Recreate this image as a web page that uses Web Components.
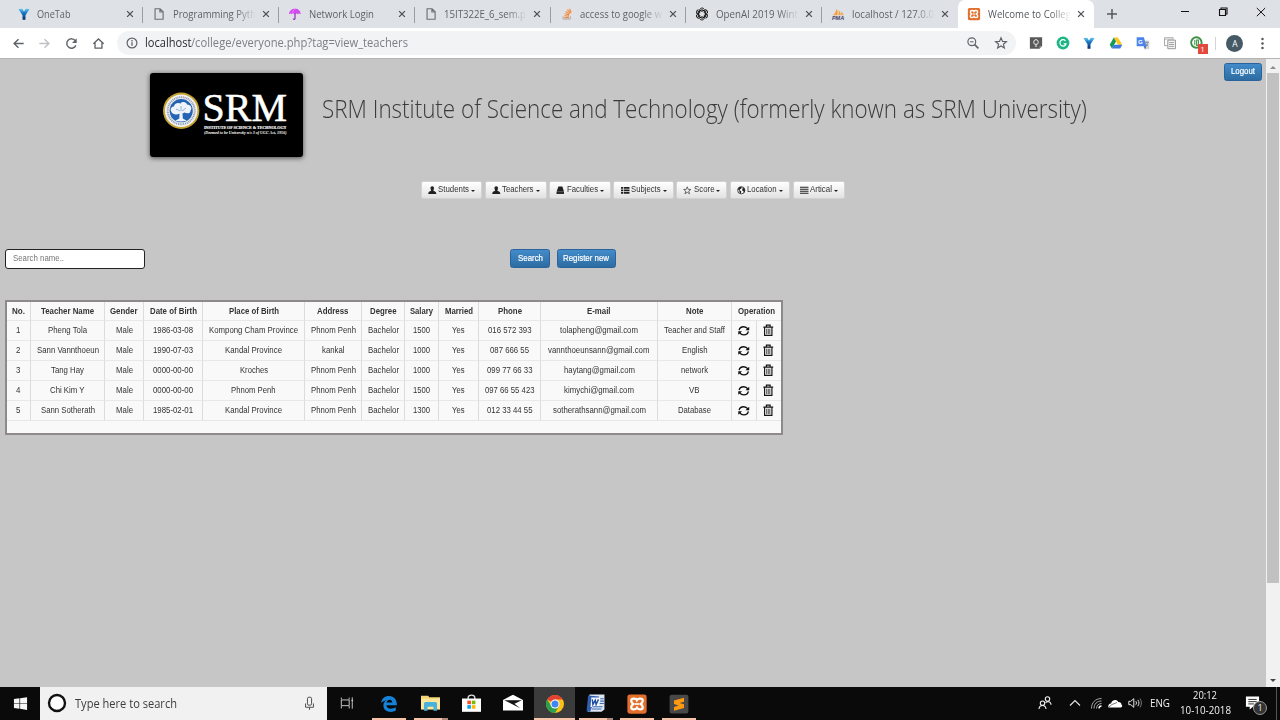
<!DOCTYPE html>
<html lang="en">
<head>
<meta charset="utf-8">
<title>Welcome to College</title>
<style>
html,body{margin:0;height:100%;overflow:hidden}
body{font-family:"Open Sans","Noto Sans",sans-serif;background:#c6c6c6}
</style>
</head>
<body>
<desktop-screen></desktop-screen>
<script>
const define = (name, render, after) => customElements.define(name, class extends HTMLElement {
  connectedCallback() {
    if (this.shadowRoot) return;
    this.attachShadow({mode: 'open'}).innerHTML = render(this);
    if (after) after(this);
  }
});

/* Text run condensed or widened to fill the width given in "w". */
define('fit-text', () => `<style>:host{display:inline-block;white-space:pre;line-height:1.3}span{display:inline-block;transform-origin:0 50%}</style><span><slot></slot></span>`, el => {
  const w = +el.getAttribute('w');
  if (!w) return;
  const span = el.shadowRoot.querySelector('span');
  const natural = span.getBoundingClientRect().width;
  el.style.width = w + 'px';
  span.style.transform = `scaleX(${(w / natural).toFixed(4)})`;
});

const line = (d, c = '#5f6368', w = 1.3) => `<path d="${d}" fill="none" stroke="${c}" stroke-width="${w}"/>`;
const fill = (d, c) => `<path d="${d}" fill="${c}"/>`;
const xampp = `<rect x="1" y="1" width="14" height="14" rx="1.8" fill="#e2702c"/>
  <path d="M7.9 5.2C7.2 3.6 3.8 3.7 3.8 5.5c0 1.2.6 1.9 1.5 2.5C4.400 8.600 3.800 9.300 3.800 10.500c0 1.800 3.400 1.900 4.200.3.8 1.600 4.200 1.500 4.200-.3 0-1.200-.6-1.900-1.500-2.500.9-.6 1.500-1.300 1.500-2.500 0-1.800-3.400-1.900-4.300-.3z" fill="none" stroke="#fff" stroke-width="1.600"/>
  <path d="M6.500 8h3" stroke="#fff" stroke-width="1.200"/>`;
const onetab = `<defs><linearGradient id="g" x1="0" y1="0" x2="0" y2="1"><stop offset="0" stop-color="#64c8ee"/><stop offset=".4" stop-color="#1a74c4"/><stop offset="1" stop-color="#0c2c62"/></linearGradient></defs>
  <path d="M1.600 2.200l4.300-.2L8 5.200l2-3.200 4.400.2L9.700 9.300V14.500H6.300V9.300z" fill="url(#g)"/>`;
const page = `<path d="M3.500 2h5.700l3.500 3.500v8.500H3.500zM9 2.200v3.500h3.500" fill="none" stroke="#6c7074" stroke-width="1.300"/>`;

const icons = {
  onetab, page, xampp,
  umbrella: `<path d="M1.200 8.300C1.300 4 4.500 1.900 8 1.900s6.500 2.200 6.700 6.400c-1.200-1.200-2.400-1.200-3.500 0-.9-1.100-2-1.200-2.700-.2h-1c-.8-1-2-.9-2.900.2-1-1.200-2.200-1.200-3.400 0z" fill="#d24bf0"/><path d="M5 8C5.200 5 6.500 3 8 2" stroke="#f08cff" fill="none"/><path d="M8 7.500v5.600c0 1.300-1.900 1.300-1.900 0" stroke="#8b25b2" stroke-width="1.300" fill="none"/>`,
  stack: `<path d="M3.500 10.500v3.300h8.300v-3.300" fill="none" stroke="#aaa" stroke-width="1.100"/><path d="M5 12.200h5.300M5 10l5.300.5M5.400 7.700l5.100 1.400M6.500 5.200l4.600 2.700M8.400 3l3.600 4.100M10.900 2l1.800 4.300" stroke="#f48d42" stroke-width="1.400"/>`,
  openai: `<g fill="none" stroke="#111" stroke-width="1.100">${[0,60,120,180,240,300].map(a => `<path d="M5.300 7.200V3.900C5.300 1.300 8.500.3 10.300 2.100M5.600 4.500L8 3.100 11.300 5" transform="rotate(${a} 8 8)"/>`).join('')}</g>`,
  pma: `<path d="M2 9.500C4 8.600 5.800 5 6.200 2.300 8 4 8 7.500 7.200 9.500zM8.200 9.500c.8-2 .7-4 .2-6 2 1.500 3 4 2.700 6zM11.800 9.500c.2-1.500 0-3-.5-4.300 1.800 1.100 2.700 2.700 3 4.300z" fill="#f6a044"/><text x="8" y="14.500" text-anchor="middle" font-family="Liberation Sans" font-weight="bold" font-style="italic" font-size="5.500" textLength="14" lengthAdjust="spacingAndGlyphs" fill="#444063">PMA</text>`,
  close: line('M4.700 4.700l6.600 6.600M11.300 4.700l-6.600 6.600', '#4c5054', 1.500),
  plus: line('M8 3v10M3 8h10', '#55595d', 1.500),
  min: line('M4 7.500h8', '#111', 1),
  restore: line('M4.500 5.500h6v6h-6zM6 5.500V4h6v6h-1.500', '#111', 1.100),
  winclose: line('M3.800 4l8.400 8.200M12.200 4l-8.400 8.200', '#111', 1),
  back: line('M13.500 8H3.500M8 3.500L3.300 8 8 12.500', '#5f6368', 1.500),
  forward: line('M2.500 8h10M8 3.500L12.700 8 8 12.500', '#bfc1c4', 1.500),
  reload: line('M12.600 10A5 5 0 1 1 12 5', '#5f6368', 1.500) + fill('M13.500 2.500v5H8.600z', '#5f6368'),
  home: line('M2.500 8.300L8 3.200l5.500 5.100M4.300 7.200V13h7.400V7.200', '#5f6368', 1.400),
  info: `<circle cx="8" cy="8" r="4.900" fill="none" stroke="#5f6368" stroke-width="1.200"/>` + line('M8 7.300v3.500M8 5.100v1.300'),
  zoomout: `<circle cx="6.800" cy="6.800" r="3.900" fill="none" stroke="#5f6368" stroke-width="1.200"/>` + line('M5 6.800h3.600', '#5f6368', 1) + line('M9.600 9.600l3.800 3.800', '#5f6368', 1.600),
  star: line('M8 2.800l1.500 3.600 3.900.3-3 2.500 1 3.800L8 11l-3.400 2 1-3.800-3-2.500 3.900-.3z', '#5f6368', 1.150),
  keep: `<path d="M1 1.500h14v10l-3 3H1z" fill="#595959"/><path d="M15 11.500l-3 3v-3z" fill="#a0a0a0"/><path d="M6.700 9.500C5 8.500 4.700 4.500 8 4.200c3.300.3 3 4.300 1.300 5.300zM6.700 11.500h2.600" fill="none" stroke="#fff" stroke-width="1.100"/>`,
  grammarly: `<circle cx="8" cy="8" r="7.300" fill="#1eb584"/>` + line('M10.800 5.500A3.600 3.600 0 1 0 11.500 9H8.800', '#fff', 1.400),
  drive: `<path d="M5.500 1.800h4.600L15.200 10h-4.900z" fill="#fdc717"/><path d="M5.500 1.800L8 6.400 3.300 14.200.8 10z" fill="#149a56"/><path d="M5.600 10h9.600l-2.400 4.200H3.300z" fill="#3f78e0"/>`,
  translate: `<path d="M8 5h7.200v10H9z" fill="#d5d7da"/><path d="M.8 1.300h8.200l2.900 10.500H.8z" fill="#4b83ee"/><path d="M9 11.800h2.900l-1.500 3.200z" fill="#3060bd"/><text x="2.300" y="8.800" font-family="Liberation Sans" font-size="7" font-weight="bold" fill="#fff">G</text>` + line('M10.600 7.300h3.700M12.400 6v1.300M13.800 7.500c-.5 2-1.400 3-2.500 4M11.200 9l2.700 2.600', '#687785', .8),
  copy: `<path d="M1.800 2h9.700v2M1.800 2v9h3.500" fill="none" stroke="#9a9a9a"/><path d="M2 3.700h9" stroke="#bbb"/><path d="M5.500 4.700h8.700v9.800H5.500z" fill="#f4f4f4" stroke="#8c8c8c"/>` + line('M7 7.500h5.500M7 9.700h5.500M7 11.900h5.500', '#8c8c8c', .9),
  library: `<circle cx="7.300" cy="7.500" r="6" fill="none" stroke="#3b9144" stroke-width="2.200"/><path d="M5.500 4.500v6.200M7.600 4.500h2v6.200h-2z" stroke="#3b9144" stroke-width="1.200" fill="none"/>`,
  menu: `<g fill="#55595d"><circle cx="8" cy="3.200" r="1.350"/><circle cx="8" cy="8" r="1.350"/><circle cx="8" cy="12.800" r="1.350"/></g>`,
  user: fill('M8 .5c2.900 0 3.500 2.200 3.200 4.800-.2 1.800-.9 2.400-1.200 3.300 0 1.300 5 1.600 5.500 4.400v2H.5v-2C1 10.200 6 9.900 6 8.600c-.3-.9-1-1.500-1.200-3.300C4.500 2.700 5.100.5 8 .5z', '#222'),
  hdd: fill('M4.500 1h7.500l3 9.500H1.200zM1 11h14v4H1z', '#222') + line('M3 13h10', '#666', .6),
  list: fill('M0 2h4.200v3.300H0zM5.500 2H16v3.300H5.500zM0 6.600h4.200v3.300H0zM5.500 6.600H16v3.300H5.500zM0 11.200h4.200v3.300H0zM5.500 11.200H16v3.300H5.500z', '#222'),
  starline: line('M8 1.500l1.800 4.800 5 .2-4 3.100 1.500 5L8 11.800l-4.300 2.800 1.500-5-4-3.100 5-.2z', '#333', 1.300),
  globe: `<circle cx="8" cy="8" r="6.800" fill="#fff" stroke="#333" stroke-width="1.700"/>` + fill('M1.500 6L5 1.800 9 2l-1 3-2.500 1L5 8l3 2-.5 4L5 12.500 4.300 9zM11 3l4 3-.5 5-2 1.500L12 9.500l-2.500-1L10 6z', '#222'),
  lines: line('M0 2.500h16M0 6.200h16M0 9.900h16M0 13.600h16', '#222', 2),
  refresh: line('M2.600 7.300C3 4.500 5.300 3.200 8 3.200c2.200 0 3.700 1 4.900 2.700M13.400 8.700c-.4 2.800-2.700 4.100-5.400 4.100-2.200 0-3.700-1-4.900-2.700', '#111', 1.600) + fill('M14.500 3.200v4.300h-4.500zM1.500 12.800V8.500H6z', '#111'),
  trash: line('M5.600 3.500V1.400h4.800v2.100M1.700 4h12.600M3.300 4.600v9.900h9.400V4.600', '#151515', 1.500) + line('M6 6v7M8 6v7M10 6v7', '#333', 1.100),
  windows: fill('M1 3.300l5.900-.9v5.200H1zM7.600 2.300L15 1.200v6.400H7.600zM1 8.300h5.900v5.300L1 12.700zM7.600 8.300H15v6.500l-7.400-1.100z', '#f5f5f5'),
  cortana: `<circle cx="8" cy="8" r="6.400" fill="#fff" stroke="#111" stroke-width="1.900"/>`,
  mic: `<rect x="5.800" y="1.300" width="4.400" height="8.500" rx="1.500" fill="none" stroke="#444" stroke-width="1"/>` + line('M3.800 8v4h8.400V8M8 12v2.700', '#444', 1),
  taskview: line('M1.500 4V1.800M10.500 4V1.800M1.500 4.500h9v6.500h-9zM1.500 11.500v2.700M10.500 11.500v2.700M14 1.500v13M13 5h2', '#ddd', 1) ,
  edge: fill('M1 7C1.600 3.200 4.300.9 8 .9c4.600 0 7 3.100 7 8.100H5.700c.2 3.700 5.300 3.900 8.300 1.900v3.200c-4.500 2.200-11 .9-11-4.700C3 7.300 4 5.600 5.800 4.700 3.900 5.100 2.200 6 1 7zM5.900 6.600h5C10.900 3.400 6.300 3.600 5.900 6.600z', '#1582d8'),
  folder: fill('M0 1.500h6l1 1.300h9v10H0z', '#f5d676') + fill('M0 4h16v9H0z', '#ffe69b') + fill('M2.500 8.500c0-1.200.7-1.700 1.700-1.700h7.600c1 0 1.700.5 1.700 1.700V14h-3v-3.300h-5V14h-3z', '#48b1dc'),
  store: line('M5.200 5V2.800C5.600.4 10.400.4 10.800 2.800V5', '#ddd', 1.100) + fill('M0 3.800h16V15H0z', '#fff') + fill('M4.500 5.600h3v3h-3z', '#f25022') + fill('M8.300 5.600h3v3h-3z', '#7fba00') + fill('M4.500 9.400h3v3h-3z', '#00a4ef') + fill('M8.300 9.400h3v3h-3z', '#ffb900'),
  mail: fill('M0 5.500L8 1.300l8 4.200V14H0z', '#fff') + fill('M1 5.800h14L9.200 8.600l4.500 3.500z', '#111'),
  chrome: `<circle cx="8" cy="8" r="7.200" fill="#fbc116"/><path d="M8 8L1.760 4.400A7.200 7.200 0 0 1 14.240 4.400H8z" fill="#e34133"/><path d="M1.760 4.400A7.200 7.200 0 0 0 8 15.200L11.100 9.800 5 9.500z" fill="#2ba14b"/><circle cx="8" cy="8" r="3.600" fill="#fff"/><circle cx="8" cy="8" r="2.800" fill="#4285f4"/>`,
  word: fill('M3 .5h12.500v12.500L13 15H1.500z', '#dce6f5') + fill('M1.800 1.200L11 2 10 10.500 5 11 3.500 15 .5 14.500z', '#2f5fae') + fill('M4.500 3h7.500l-1 8H3.800z', '#f5f8fd') + line('M12 4h3M12 6h3M11.500 8h3.500M5.500 10.700h8.500M5 12.700h8', '#3c6ab4', .9) + line('M5.300 4.500l.5 4.300 2-3.500.7 3.500 2-4.300', '#1f4e9f', 1.200),
  sublime: `<rect x=".5" y=".5" width="15" height="15" rx="1.500" fill="#484848"/>` + fill('M12 3v3.100L8.400 7.200l3.600 1v3L4 13.400v-3.100l3.600-1.100L4 8V5.200z', '#ff9a10'),
  people: `<g fill="none" stroke="#eee" stroke-width="1.100"><circle cx="10.500" cy="4" r="2.200"/><path d="M8.500 8c1.400-2.300 5.500-1.700 5.500 1.700"/><circle cx="5.500" cy="8.200" r="2.200"/><path d="M2 14c.4-4.700 6.600-4.700 7 0"/></g>`,
  chevron: line('M3 10.500l5-5 5 5', '#e8e8e8', 1.100),
  wifi: line('M3.500 13.500C3.500 7.500 7.500 3.500 13.500 3.500M6 13.500c0-4.500 3-7.500 7.500-7.500M8.500 13.500c0-3 2-5 5-5', '#aaa', 1) + line('M11 13.500c0-1.500 1-2.500 2.500-2.500', '#fff', 1.300),
  cloud: fill('M1.500 12.500c-.8-3 1.500-4.200 2.600-4C4.600 5 9.700 3.500 11.100 7c2.500-.2 3.600 1.500 3.300 2.600 1.300.7.900 2.900-.5 2.900z', '#fff') + line('M2 12l3-2.500 5-2', '#222', .6),
  speaker: line('M1.800 6.300h2l3-2.600v8.600l-3-2.600h-2zM8.800 6.200c.8 1 .8 2.600 0 3.600M10.800 4.900c1.500 1.800 1.500 4.500 0 6.300', '#e6e6e6', 1) + line('M12.900 3.500c2 2.500 2 6.500 0 9', '#777', 1),
  note: fill('M1 1.500h14v11H8.500L5 15.500v-3H1z', '#fff') + line('M3.500 4.700h9M3.500 7.100h9M3.500 9.500h6', '#222', 1)
};
define('x-icon', el => {
  const s = el.getAttribute('s') || 16;
  return `<style>:host{display:inline-block;flex:none;width:${s}px;height:${s}px}svg{display:block;overflow:visible}</style>
  <svg width="${s}" height="${s}" viewBox="0 0 16 16">${icons[el.getAttribute('name')]}</svg>`;
});

define('browser-tab', el => `<style>
  :host{display:flex;align-items:center;width:135.800px;height:28px;box-sizing:border-box;padding-left:9px;position:relative;color:#5f6368;font-size:10.500px;flex:none}
  :host::after{content:"";position:absolute;right:0;top:6.500px;width:1px;height:16px;background:#9a9da2}
  :host([last])::after{display:none}
  :host([active]){background:#fff;border-radius:7px 7px 0 0;color:#55595d}
  :host([active])::after{display:none}
  .t{margin-left:6.500px;width:83px;overflow:hidden;line-height:16px;height:16px}
  .t.fade{-webkit-mask-image:linear-gradient(90deg,#000 75%,transparent)}
  .c{margin-left:3px}
  x-icon{display:block}
</style><x-icon name="${el.getAttribute('icon')}" s="14"></x-icon><div class="t ${+el.getAttribute('w') > 75 ? 'fade' : ''}"><fit-text w="${el.getAttribute('w')}">${el.getAttribute('label')}</fit-text></div><x-icon class="c" name="close" s="14"></x-icon>`);

define('tab-strip', () => `<style>
  :host{display:flex;height:28px;background:#dee1e6;padding-left:7.500px}
  .new{margin:6px 0 0 10px}
  .win{margin-left:auto;display:flex;padding-top:4px}
  .win x-icon{margin-right:22px}
  .win x-icon:last-child{margin-right:11.500px}
</style>${[['onetab','OneTab',33.500],['page','Programming Pyth',83],['umbrella','Network Login',65],['page','15IT322E_6_sem.p',82],['stack','access to google w',82],['openai','OpenAI 2019 Wint',82],['pma','localhost / 127.0.0',82],['xampp','Welcome to Colleg',83]]
  .map((t, i) => `<browser-tab icon="${t[0]}" label="${t[1]}" w="${t[2]}" ${i == 7 ? 'active' : i == 6 ? 'last' : ''}></browser-tab>`).join('')}
<x-icon class="new" name="plus"></x-icon><div class="win"><x-icon name="min"></x-icon><x-icon name="restore"></x-icon><x-icon name="winclose"></x-icon></div>`);

define('tool-bar', () => `<style>
  :host{display:flex;align-items:center;height:30px;background:#fff;border-bottom:1px solid #b4b4b4;box-sizing:content-box;font-size:11.700px;color:#7c8085}
  .nav{display:grid;grid-template-columns:repeat(4,26.800px);justify-items:center;padding-left:4.700px;width:107.200px}
  .box{margin-left:5px;width:899px;height:24px;border-radius:12px;background:#f1f3f4;display:flex;align-items:center;box-sizing:border-box;padding:0 7px}
  .url{margin-left:5px;display:flex}
  .url .h{color:#2b2d30}
  .r{margin-left:auto;display:flex;gap:12px}
  .ext{display:grid;grid-template-columns:repeat(7,26.800px);justify-items:center;margin-left:6.500px}
  .lib{position:relative;height:14px}
  .b{position:absolute;left:8px;top:8px;width:10px;height:10px;background:#e3493c;color:#fff;font-size:8px;line-height:10px;text-align:center}
  .sep{width:1px;height:13px;background:#d2d4d7;margin-left:5.500px}
  .av{width:17px;height:17px;border-radius:50%;background:#455a64;color:#fff;font-size:8.500px;line-height:17px;text-align:center;margin-left:10px}
  .m{margin-left:11.500px}
</style>
<div class="nav">${['back','forward','reload','home'].map(n => `<x-icon name="${n}" s="15"></x-icon>`).join('')}</div>
<div class="box"><x-icon name="info"></x-icon><div class="url"><fit-text class="h" w="46.500">localhost</fit-text><fit-text w="217">/college/everyone.php?tag=view_teachers</fit-text></div>
<div class="r"><x-icon name="zoomout"></x-icon><x-icon name="star"></x-icon></div></div>
<div class="ext">${['keep','grammarly','onetab','drive','translate','copy'].map(n => `<x-icon name="${n}" s="14"></x-icon>`).join('')}<div class="lib"><x-icon name="library" s="14"></x-icon><div class="b">1</div></div></div>
<div class="sep"></div><div class="av">A</div><x-icon class="m" name="menu" s="15"></x-icon>`);

define('action-button', () => `<style>
  :host{display:flex;align-items:center;justify-content:center;box-sizing:border-box;height:19px;border:1px solid #2a639b;border-radius:2.500px;background:linear-gradient(#428bca,#2d6ca2);color:#fff;font:8.900px "Liberation Sans",Arial,sans-serif;-webkit-text-stroke:.2px #fff}
</style><slot></slot>`);

define('menu-button', el => `<style>
  :host{display:flex;align-items:center;justify-content:center;box-sizing:border-box;height:18px;border-radius:2px;border:1px solid #d2d2d2;background:linear-gradient(#fff,#e2e2e2);color:#333;font:8.900px "Liberation Sans",Arial,sans-serif;width:${el.getAttribute('bw')}px}
  x-icon{margin-right:2px}
  i{border:2.300px solid transparent;border-top-color:#222;border-bottom:0;margin:2px 0 0 2px}
</style><x-icon name="${el.getAttribute('icon')}" s="8.500"></x-icon><fit-text w="${el.getAttribute('w')}">${el.getAttribute('label')}</fit-text><i></i>`);

define('college-logo', () => `<style>
  :host{display:block;width:153px;height:84px;background:#000;border-radius:3px;box-shadow:0 1px 5px rgba(0,0,0,.65)}
  svg{display:block}
</style><svg width="153" height="84" viewBox="0 0 153 84">
  <circle cx="31.200" cy="37.700" r="18.200" fill="#c3a12e"/><circle cx="31.200" cy="37.700" r="16.300" fill="#f1f1ee"/>
  <circle cx="31.200" cy="37.700" r="13.500" fill="none" stroke="#8b98b8" stroke-width="2" stroke-dasharray="1 .8"/>
  <circle cx="31.200" cy="37.700" r="11.600" fill="#2563b5"/>
  <path d="M21 38c-1-3 1-4.500 3-4.500C24 30.500 28 29 30.500 30.500c2-2.500 6-1.500 6.500 1 4 0 5.500 4 3.500 6 .5 3-4 3.500-6 2l-2 1 .3 5 4 2.200c-4 1-8 1-11.500 0l4-2.200.2-5C27 42.500 21.500 41.500 21 38z" fill="#eef3fa"/>
  <path d="M26 36l4 2M36 35l-4 3M31 33v5" stroke="#6b94cc" stroke-width=".7"/>
  <g fill="#fff" font-family="Liberation Serif,serif">
  <text x="52.500" y="48" font-size="39" textLength="84.500" lengthAdjust="spacingAndGlyphs" stroke="#fff" stroke-width=".5">SRM</text>
  <text x="54" y="55.500" font-size="4.300" font-weight="bold" textLength="82.500" lengthAdjust="spacingAndGlyphs" stroke="#fff" stroke-width=".15">INSTITUTE OF SCIENCE &amp; TECHNOLOGY</text>
  <text x="54" y="60.500" font-size="4.200" font-weight="bold" font-style="italic" textLength="82.500" lengthAdjust="spacingAndGlyphs">(Deemed to be University u/s 3 of UGC Act, 1956)</text></g></svg>`);

const head = [['No.',13],['Teacher Name',53],['Gender',27.500],['Date of Birth',47],['Place of Birth',50],['Address',31.500],['Degree',26.500],['Salary',23],['Married',28],['Phone',24],['E-mail',23.500],['Note',17.500],['Operation',37]];
const rows = [
  [['1'],['Pheng Tola',39],['Male',17],['1986-03-08',40],['Kompong Cham Province',89],['Phnom Penh',45],['Bachelor',31],['1500',17],['Yes',12.500],['016 572 393',43.500],['tolapheng@gmail.com',78],['Teacher and Staff',61]],
  [['2'],['Sann Vannthoeun',62],['Male',17],['1990-07-03',40],['Kandal Province',57],['kankal',22.500],['Bachelor',31],['1000',17],['Yes',12.500],['087 666 55',39],['vannthoeunsann@gmail.com',101.500],['English',25.500]],
  [['3'],['Tang Hay',33],['Male',17],['0000-00-00',40],['Kroches',28],['Phnom Penh',45],['Bachelor',31],['1000',17],['Yes',12.500],['099 77 66 33',45.500],['haytang@gmail.com',71],['network',27]],
  [['4'],['Chi Kim Y',34.500],['Male',17],['0000-00-00',40],['Phnom Penh',44.500],['Phnom Penh',45],['Bachelor',31],['1500',17],['Yes',12.500],['097 66 55 423',49.500],['kimychi@gmail.com',70],['VB',10.500]],
  [['5'],['Sann Sotherath',54],['Male',17],['1985-02-01',40],['Kandal Province',57],['Phnom Penh',45],['Bachelor',31],['1300',17],['Yes',12.500],['012 33 44 55',45.500],['sotherathsann@gmail.com',93],['Database',33]]
];
const cell = c => `<div><fit-text w="${c[1] || 4.400}">${c[0]}</fit-text></div>`;
define('teacher-table', () => `<style>
  :host{display:block;box-sizing:border-box;width:778px;height:135px;border:2px solid #8e8a8a;border-left-width:2.500px;background:#f9f9f9;font:8.900px "Liberation Sans",Arial,sans-serif;color:#333}
  .row{display:grid;grid-template-columns:24px 74px 39px 59px 102px 57px 43px 34px 40px 62px 117px 74px 25px 24px;height:20px}
  .row>div{display:flex;align-items:center;justify-content:center;border-right:1px solid #dcdcdc;border-bottom:1px solid #e8e8e8;box-sizing:border-box}
  .head{height:19px;font-weight:bold}
  .head>div{padding-top:1px}
  .head>div:last-child{grid-column:span 2}
  .row>div:last-child{border-right:0}
  .row>div.op:last-child{padding-right:2px}
</style><div class="row head">${head.map(cell).join('')}</div>
${rows.map(r => `<div class="row">${r.map(cell).join('')}<div class="op"><x-icon name="refresh" s="13.500"></x-icon></div><div class="op"><x-icon name="trash" s="12.500"></x-icon></div></div>`).join('')}`);

define('page-view', () => `<style>
  :host{display:flex;height:627.500px;background:#c6c6c6;overflow:hidden}
  main{width:1266px}
  header{display:flex;padding:14px 4px 0 150px;height:122px;box-sizing:border-box}
  h1{margin:17px 0 0 19px;font-weight:300;font-size:25px;line-height:36px;color:#3b3b3b}
  header action-button{margin:-10px 0 0 auto;width:38px;height:18px}
  nav{display:flex;gap:2.600px;margin-left:420.500px}
  .find{display:flex;margin-top:50px;padding-left:5px}
  .inp{box-sizing:border-box;width:140px;height:20px;border:1.500px solid #222;border-radius:3px;background:#fff;color:#777;font:8.900px "Liberation Sans",Arial,sans-serif;display:flex;align-items:center;padding-left:7px}
  .s{width:40px;margin-left:365px}.n{width:59.500px;margin-left:6.500px}
  teacher-table{margin:31px 0 0 5px}
  aside{width:14px;background:#f1f1f1;display:flex;flex-direction:column;align-items:center}
  .up,.dn{border:3px solid transparent}
  .up{border-bottom-color:#8c8c8c;border-top:0;margin:7px 0 4px}
  .dn{border-top-color:#444;border-bottom:0;margin:auto 0 5px}
  .th{width:12px;height:510px;background:#c1c1c1}
</style><main>
<header><college-logo></college-logo><h1><fit-text w="765">SRM Institute of Science and Technology (formerly known as SRM University)</fit-text></h1><action-button><fit-text w="24">Logout</fit-text></action-button></header>
<nav>${[['user','Students',61.500,31],['user','Teachers',62,31.500],['hdd','Faculties',61.500,31],['list','Subjects',60.500,29.500],['starline','Score',51,20.500],['globe','Location',60,29.500],['lines','Artical',52.500,22]].map(b => `<menu-button icon="${b[0]}" label="${b[1]}" bw="${b[2]}" w="${b[3]}"></menu-button>`).join('')}</nav>
<div class="find"><div class="inp"><fit-text w="51">Search name..</fit-text></div><action-button class="s"><fit-text w="25">Search</fit-text></action-button><action-button class="n"><fit-text w="46">Register new</fit-text></action-button></div>
<teacher-table></teacher-table></main>
<aside><div class="up"></div><div class="th"></div><div class="dn"></div></aside>`);

define('task-bar', () => `<style>
  :host{display:flex;height:33.500px;background:#0a0a0a;color:#f2f2f2;font-size:10px}
  .start{width:40px;display:flex;align-items:center;justify-content:center}
  .search{width:287px;box-sizing:border-box;background:#f1f1f1;color:#3c3c3c;display:flex;align-items:center;padding:0 10px 0 7px;font-size:12px}
  .search fit-text{margin-left:7.500px;padding-top:1px}.search x-icon:last-child{margin-left:auto}
  .tv{width:40px;display:flex;align-items:center;justify-content:center}
  .apps{display:grid;grid-template-columns:repeat(8,41.350px);margin-left:1.500px}
  .app{display:flex;align-items:center;justify-content:center;box-sizing:border-box;margin:0 .6px}
  .on{border-bottom:2.500px solid #f6c2a8;padding-top:2.500px;margin:0 3.700px}
  .on.more{border-image:linear-gradient(90deg,#f6c2a8 80%,#ad8a79 80%) 1}
  .cur{background:#3b3b3b;margin:0 .6px}
  .tray{margin-left:auto;display:flex;align-items:center}
  .clock{width:56px;margin-left:7px;text-align:center;display:flex;flex-direction:column;align-items:center}
  .clock fit-text{line-height:15px}
  .nt{position:relative;margin-left:12px;height:16px}
  .bd{position:absolute;left:8px;top:6px;width:12px;height:12px;border:1px solid #999;border-radius:50%;background:#333;font-size:9px;line-height:12px;text-align:center}
  .end{width:1px;height:33.500px;background:#555;margin-left:16px;margin-right:3px}
</style><div class="start"><x-icon name="windows" s="15"></x-icon></div>
<div class="search"><x-icon name="cortana" s="20"></x-icon><fit-text w="102">Type here to search</fit-text><x-icon name="mic" s="15"></x-icon></div>
<div class="tv"><x-icon name="taskview" s="14"></x-icon></div>
<div class="apps">${[['edge','on',18],['folder','on more',19],['store','',19],['mail','',20],['chrome','on cur',20],['word','on more',19],['xampp','on',22],['sublime','on',20]].map(a => `<div class="app ${a[1]}"><x-icon name="${a[0]}" s="${a[2]}"></x-icon></div>`).join('')}</div>
<div class="tray"><x-icon name="people"></x-icon><x-icon style="margin-left:14px" name="chevron"></x-icon><x-icon style="margin-left:5px" name="wifi"></x-icon><x-icon style="margin-left:3px" name="cloud"></x-icon><x-icon style="margin-left:4px" name="speaker"></x-icon><fit-text style="margin-left:7px" w="20">ENG</fit-text>
<div class="clock"><fit-text w="24">20:12</fit-text><fit-text w="51">10-10-2018</fit-text></div><div class="nt"><x-icon name="note" s="15"></x-icon><div class="bd">1</div></div><div class="end"></div></div>`);

define('desktop-screen', () => `<style>:host{display:flex;flex-direction:column;width:1280px;height:720px;overflow:hidden}:host>*{flex:none}</style>
<tab-strip></tab-strip><tool-bar></tool-bar><page-view></page-view><task-bar></task-bar>`);
</script>
</body>
</html>
